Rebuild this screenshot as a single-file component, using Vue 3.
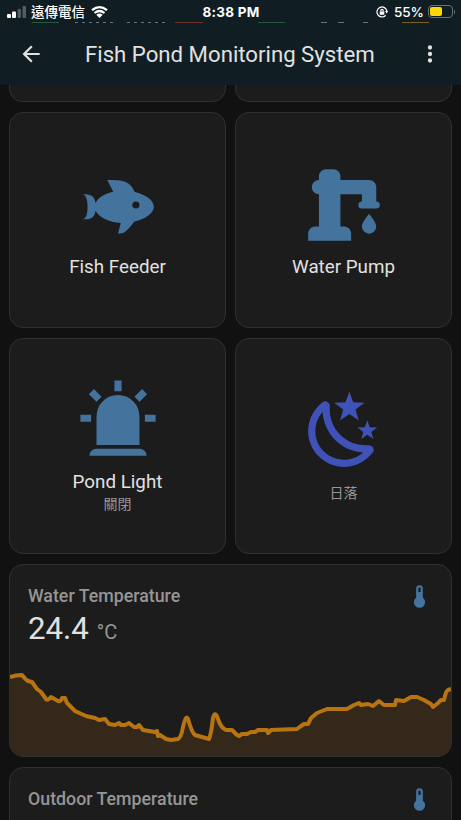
<script setup>
const icons = {
  fish: 'M12,20L12.76,17C9.5,16.79 6.59,15.4 5.75,13.58C5.66,14.06 5.53,14.5 5.33,14.83C4.67,16 3.33,16 2,16C3.1,16 3.5,14.43 3.5,12.5C3.5,10.57 3.1,9 2,9C3.33,9 4.67,9 5.33,10.17C5.53,10.5 5.66,10.94 5.75,11.42C6.4,10 8.32,8.85 10.66,8.32L9,5C11,5 13,5 14.33,5.67C15.46,6.23 16.11,7.27 16.69,8.38C19.61,9.08 22,10.66 22,12.5C22,14.38 19.5,16 16.5,16.66C15.67,17.76 14.86,18.78 14.17,19.33C13.33,20 12.67,20 12,20M17,11A1,1 0 0,0 16,12A1,1 0 0,0 17,13A1,1 0 0,0 18,12A1,1 0 0,0 17,11Z',
  pump: 'M19 14.5C19 14.5 21 16.67 21 18A2 2 0 0 1 17 18C17 16.67 19 14.5 19 14.5M5 18V9A2 2 0 0 1 3 7A2 2 0 0 1 5 5V4A2 2 0 0 1 7 2H9A2 2 0 0 1 11 4V5H19A2 2 0 0 1 21 7V11A1 1 0 0 1 22 12A1 1 0 0 1 21 13H17A1 1 0 0 1 16 12A1 1 0 0 1 17 11V9H11V18H12A2 2 0 0 1 14 20V22H2V20A2 2 0 0 1 4 18Z',
  light: 'M6,6.9L3.87,4.78L5.28,3.37L7.4,5.5L6,6.9M13,1V4H11V1H13M20.13,4.78L18,6.9L16.6,5.5L18.72,3.37L20.13,4.78M4.5,10.5V12.5H1.5V10.5H4.5M19.5,10.5H22.5V12.5H19.5V10.5M6,20H18A2,2 0 0,1 20,22H4A2,2 0 0,1 6,20M12,5A6,6 0 0,1 18,11V19H6V11A6,6 0 0,1 12,5Z',
  night: 'M17.75,4.09L15.22,6.03L16.13,9.09L13.5,7.28L10.87,9.09L11.78,6.03L9.25,4.09L12.44,4L13.5,1L14.56,4L17.75,4.09M21.25,11L19.61,12.25L20.2,14.23L18.5,13.06L16.8,14.23L17.39,12.25L15.75,11L17.81,10.95L18.5,9L19.19,10.95L21.25,11M18.97,15.95C19.8,15.87 20.69,17.05 20.16,17.8C19.84,18.25 19.5,18.67 19.08,19.07C15.17,23 8.84,23 4.94,19.07C1.03,15.17 1.03,8.83 4.94,4.93C5.34,4.53 5.76,4.17 6.21,3.85C6.96,3.32 8.14,4.21 8.06,5.04C7.79,7.9 8.75,10.87 10.95,13.06C13.14,15.26 16.1,16.22 18.97,15.95M17.33,17.97C14.5,17.81 11.7,16.64 9.53,14.5C7.36,12.31 6.2,9.5 6.04,6.68C3.23,9.82 3.34,14.64 6.35,17.66C9.37,20.67 14.19,20.78 17.33,17.97Z',
  thermometer: 'M15 13V5A3 3 0 0 0 9 5V13A5 5 0 1 0 15 13M12 4A1 1 0 0 1 13 5V8H11V5A1 1 0 0 1 12 4Z',
}

const tiles = [
  { icon: 'fish', name: 'Fish Feeder' },
  { icon: 'pump', name: 'Water Pump' },
  { icon: 'light', name: 'Pond Light', state: '關閉' },
  { icon: 'night', state: '日落', accent: true },
]

const sensors = [
  { name: 'Water Temperature', value: '24.4', chart: true },
  { name: 'Outdoor Temperature', value: '24.6' },
]

// Temperature history in chart units: 441 wide, 86 high
const line = 'M0 7L6 5.5L12 5Q15 9 18 11L22 12L27 19L31 22L36 29Q38 31 41 27L48 31Q51 32 52 28L55 28L57 33L65 41L76 46L85 48L89 50L95 49L99 54L105 55L109 53L111 55L115 55L119 53L124 57L127 57L129 55L133 60L145 62L147 61L148 66L150 65L156 69L161 70L168 69Q171 68 173 57Q176 44 178 49Q182 63 185 65L199 69Q201 65 203 48Q205 40 208 49Q211 58 216 60L222 60L227 65L229 66L232 64L237 64L241 62L245 62L248 60L257 60L258 63L261 60L287 59L291 56L294 54L298 54L301 48L307 43L317 39L337 39L344 35L349 33L351 35L358 34L363 36L369 31L374 35L385 35L386 30L394 31L401 27L407 27L414 30L421 34L423 37L428 33L431 30L434 30Q436 20 438 20L441 19'
</script>

<template>
  <div class="screen">
    <header class="header">
      <div class="status">
        <div class="carrier">
          <svg class="signal" viewBox="0 0 20 12"><rect x="0" y="8" width="4" height="4" rx="1" /><rect x="5" y="5.500" width="4" height="6.500" rx="1" /><rect class="off" x="10.500" y="3" width="3.500" height="9" rx="1" /><rect class="off" x="15.500" y="0" width="3.500" height="12" rx="1" /></svg>
          <span class="carrier-name">遠傳電信</span>
          <svg class="wifi" viewBox="0 0 17 12"><path d="M1 4.200Q8.500 -1.800 16 4.200M3.500 7Q8.500 3 13.500 7" /><path class="solid" d="M5.300 8.700Q8.500 6.200 11.700 8.700L8.500 12Z" /></svg>
        </div>
        <span class="clock">8:38 PM</span>
        <div class="power">
          <svg class="lock" viewBox="0 0 12 12"><path class="ring" d="M9.700 9.300A5 5 0 1 1 10.900 5.200" /><path d="M9 5.100H12L10.800 7.600ZM3.700 5.500H8.300V8.700H3.700Z" /><path class="ring" d="M4.800 5.600V4.500A1.200 1.200 0 0 1 7.200 4.500V5.600" /></svg>
          <span class="percent">55%</span>
          <div class="battery"><div class="charge"></div></div>
          <i class="battery-tip"></i>
        </div>
      </div>
      <svg class="peek" viewBox="0 0 461 2"><path stroke="#245a3c" d="M32 .5H59M258 .5H285" /><path stroke="#67747a" stroke-dasharray="3 4" d="M75 .5H115M127 .5H166" /><path stroke="#67747a" d="M321 .5H327M338 .5H344M363 .5H368" /><path stroke="#733029" d="M175 .5H203" /><path stroke="#77611a" d="M402 .5H429" /></svg>
      <div class="toolbar">
        <svg class="back" viewBox="0 0 24 24"><path d="M20,11V13H8L13.500,18.500L12.080,19.920L4.160,12L12.080,4.080L13.500,5.500L8,11H20Z" /></svg>
        <h1>Fish Pond Monitoring System</h1>
        <svg class="more" viewBox="0 0 24 24"><path d="M12,16A2,2 0 0,1 14,18A2,2 0 0,1 12,20A2,2 0 0,1 10,18A2,2 0 0,1 12,16M12,10A2,2 0 0,1 14,12A2,2 0 0,1 12,14A2,2 0 0,1 10,12A2,2 0 0,1 12,10M12,4A2,2 0 0,1 14,6A2,2 0 0,1 12,8A2,2 0 0,1 10,6A2,2 0 0,1 12,4Z" /></svg>
      </div>
    </header>

    <main class="content">
      <div class="tail-row"><div class="card tail"></div><div class="card tail"></div></div>
      <div class="grid">
        <section v-for="tile in tiles" :key="tile.icon" class="card tile" :class="{ accent: tile.accent, stateful: tile.state }">
          <svg viewBox="0 0 24 24"><path :d="icons[tile.icon]" /></svg>
          <span v-if="tile.name" class="name">{{ tile.name }}</span>
          <span v-if="tile.state" class="state">{{ tile.state }}</span>
        </section>
      </div>
      <section v-for="sensor in sensors" :key="sensor.name" class="card sensor">
        <div class="sensor-head">
          <span>{{ sensor.name }}</span>
          <svg viewBox="0 0 24 24"><path :d="icons.thermometer" /></svg>
        </div>
        <div class="reading"><span class="value">{{ sensor.value }}</span><span class="unit">°C</span></div>
        <svg v-if="sensor.chart" class="chart" viewBox="0 0 441 86" preserveAspectRatio="none">
          <path class="area" :d="line + 'V86H0Z'" />
          <path class="line" :d="line" />
        </svg>
      </section>
    </main>
  </div>
</template>

<style>
body { background: #111; }
</style>

<style scoped>
.screen { width: 461px; height: 820px; overflow: hidden; background: #111; color: #e1e1e1; font-family: Roboto, "Noto Sans CJK TC", sans-serif; }
svg { display: block; flex: none; fill: currentColor; }
.header { height: 85px; background: #101e24; }
.status { height: 22px; display: grid; grid-template-columns: 1fr auto 1fr; align-items: center; padding: 1px 6px 0 7px; box-sizing: border-box; color: #fff; font-family: Inter, "Noto Sans CJK TC", sans-serif; }
.carrier { display: flex; align-items: center; }
.signal { width: 20px; height: 12px; }
.off { opacity: .28; }
.carrier-name { font-size: 13.500px; line-height: 20px; font-weight: 500; margin: 0 6px 0 4px; }
.wifi { width: 17px; height: 12px; }
.wifi path { fill: none; stroke: currentColor; stroke-width: 2.200; }
.wifi .solid { fill: currentColor; stroke: none; }
.clock { font-size: 13.500px; font-weight: 700; letter-spacing: .25px; }
.power { display: flex; align-items: center; justify-content: flex-end; }
.lock { width: 12px; height: 12px; margin-right: 6px; }
.lock .ring { fill: none; stroke: currentColor; stroke-width: 1.200; }
.percent { font-size: 13.500px; font-weight: 500; margin-right: 4px; }
.battery { width: 25px; height: 13px; box-sizing: border-box; border: 1px solid #65717a; border-radius: 4px; padding: 1px; }
.charge { width: 12px; height: 9px; border-radius: 2px; background: #ffd60a; }
.battery-tip { width: 1px; height: 4px; margin-left: 1px; background: #65717a; border-radius: 0 2px 2px 0; }
.peek { width: 461px; height: 2px; stroke-width: 1; }
.toolbar { display: flex; align-items: center; height: 60px; padding: 0 18px; }
.back, .more { width: 26px; height: 26px; }
.more { margin-left: auto; }
h1 { margin: 0 0 0 41px; font-size: 22.200px; line-height: 30px; font-weight: 400; white-space: nowrap; }
.content { padding: 0 9px; display: flex; flex-direction: column; gap: 10px; }
.card { box-sizing: border-box; background: #1c1c1c; border: 1px solid #303030; border-radius: 14px; overflow: hidden; }
.tail-row, .grid { display: grid; grid-template-columns: 1fr 1fr; gap: 10px 9px; }
.tail { height: 17px; border-top: 0; border-radius: 0 0 14px 14px; }
.grid { grid-auto-rows: 216px; }
.tile { display: flex; flex-direction: column; align-items: center; justify-content: center; }
.stateful { padding-bottom: 2px; }
.tile svg { width: 86px; height: 86px; color: #44739e; }
.tile.accent svg { color: #4052b8; }
.name { font-size: 18.800px; line-height: 22px; margin-top: 8px; }
.state { font-size: 14px; line-height: 20px; margin-top: 1px; color: #969696; }
.accent .state { margin-top: 9px; }
.sensor { height: 193px; display: flex; flex-direction: column; flex: none; }
.sensor-head { display: flex; justify-content: space-between; align-items: center; height: 27px; margin-top: 18px; padding: 0 18px; font-size: 17.800px; line-height: 25px; font-weight: 500; color: #969696; }
.sensor-head span { margin-bottom: 3px; }
.sensor-head svg { width: 27px; height: 27px; color: #44739e; }
.reading { display: flex; align-items: baseline; height: 38px; padding: 0 18px; line-height: 38px; }
.value { font-size: 31.200px; }
.unit { margin-left: 8px; font-size: 20px; color: #969696; }
.chart { width: 100%; height: 86px; margin-top: auto; overflow: visible; }
.area { fill: #34281b; }
.line { fill: none; stroke: #b87410; stroke-width: 4; stroke-linejoin: round; }
</style>
